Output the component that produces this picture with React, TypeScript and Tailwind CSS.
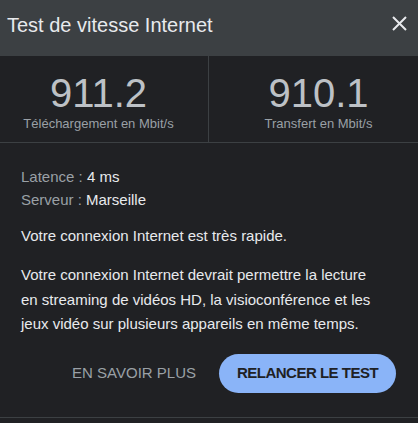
import React from 'react';

function CloseIcon({ className }: { className?: string }) {
  return (
    <svg viewBox="0 0 15 15" className={className} fill="none" stroke="currentColor" strokeWidth={2}>
      <path d="M1 1L14 14M14 1L1 14" />
    </svg>
  );
}

function Stat({ value, label, className }: { value: string; label: string; className?: string }) {
  return (
    <div className={`flex flex-col items-center pt-[15px] ${className ?? ''}`}>
      <span className="text-[40px] leading-[44px] text-[#bdc1c6]">{value}</span>
      <span className="text-[13px] leading-[18px] text-[#9aa0a6]">{label}</span>
    </div>
  );
}

export default function App() {
  return (
    <div className="w-[418px] h-[423px] bg-[#202124] text-[#e8eaed] overflow-hidden" style={{ fontFamily: '"Liberation Sans", Arial, sans-serif' }}>
      <div className="h-14 bg-[#3c4043] flex items-start justify-between pl-[7px] pr-[11px] pt-[12px]">
        <h1 className="text-[20px] leading-[26px] text-[#e8eaed]">Test de vitesse Internet</h1>
        <button className="text-[#e8eaed] mt-[4px]">
          <CloseIcon className="h-[15px] w-[15px]" />
        </button>
      </div>

      <div className="grid grid-cols-2 h-[87px] border-b border-[#3c4043]">
        <div className="border-r border-[#3c4043]">
          <Stat value="911.2" label="Téléchargement en Mbit/s" className="pr-[11px]" />
        </div>
        <Stat value="910.1" label="Transfert en Mbit/s" className="pl-[10px]" />
      </div>

      <div className="pl-[21px] pr-[34px] pt-[22px] text-[15px]">
        <p className="leading-[23px]">
          <span className="text-[#9aa0a6]">Latence : </span>4 ms
        </p>
        <p className="leading-[23px]">
          <span className="text-[#9aa0a6]">Serveur : </span>Marseille
        </p>
        <p className="mt-[13px] leading-[24px]">Votre connexion Internet est très rapide.</p>
        <p className="mt-[15px] leading-[24.5px]">
          Votre connexion Internet devrait permettre la lecture en streaming de vidéos HD, la visioconférence et les jeux vidéo sur plusieurs appareils en même temps.
        </p>
      </div>

      <div className="flex items-center justify-end gap-[23px] pr-[22px] mt-[17px] pb-[24px] border-b border-[#3c4043]">
        <button className="text-[15px] text-[#9aa0a6]">EN SAVOIR PLUS</button>
        <button className="h-[39px] w-[177px] rounded-full bg-[#8ab4f8] text-[15px] font-bold tracking-[-0.5px] text-[#202124]">RELANCER LE TEST</button>
      </div>
    </div>
  );
}
